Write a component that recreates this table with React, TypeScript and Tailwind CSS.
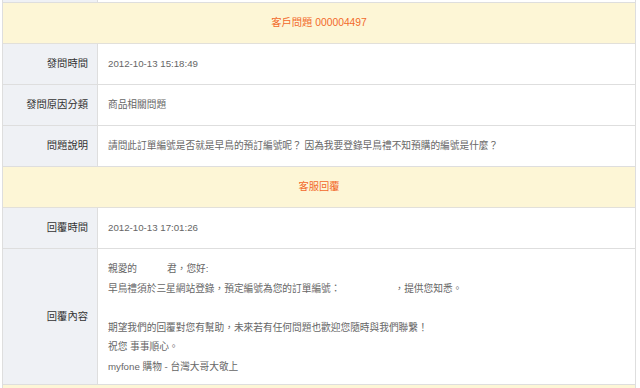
const font = "font-['Liberation_Sans','Noto_Sans_CJK_TC',sans-serif]";

function Header({ children }: { children?: React.ReactNode }) {
  return (
    <div className="flex h-[41px] items-center justify-center border-b border-[#e2e0da] bg-[#fdf6d6] text-[10.3px] text-[#f2692a]">
      {children}
    </div>
  );
}

function Row({ label, children, className = "h-[41px] items-center" }: { label: string; children: React.ReactNode; className?: string }) {
  return (
    <div className={`flex border-b border-[#dedede] ${className}`}>
      <div className="flex w-[95px] shrink-0 items-center justify-end self-stretch border-r border-[#dedede] bg-[#eff1f5] pr-[9px] text-[10.3px] text-[#333]">
        {label}
      </div>
      <div className="flex-1 pl-[10px] text-[9.7px] text-[#666]">{children}</div>
    </div>
  );
}

export default function App() {
  return (
    <div className={`h-[388px] w-[640px] overflow-hidden bg-white pl-[2px] ${font}`}>
      <div className="w-[634px] border-x border-[#dedede]">
        <div className="flex h-[3px] border-b border-[#dedede]">
          <div className="w-[95px] border-r border-[#dedede] bg-[#eff1f5]" />
          <div className="flex-1" />
        </div>

        <Header>客戶問題 000004497</Header>
        <Row label="發問時間">2012-10-13 15:18:49</Row>
        <Row label="發問原因分類">商品相關問題</Row>
        <Row label="問題說明">請問此訂單編號是否就是早鳥的預訂編號呢？ 因為我要登錄早鳥禮不知預購的編號是什麼？</Row>

        <Header>客服回覆</Header>
        <Row label="回覆時間">2012-10-13 17:01:26</Row>
        <Row label="回覆內容" className="items-stretch">
          <div className="pb-[8px] pt-[10px] leading-[19.5px]">
            <p>
              親愛的<span className="inline-block w-[30px]" />君，您好:
            </p>
            <p>
              早鳥禮須於三星網站登錄，預定編號為您的訂單編號：<span className="inline-block w-[54px]" />，提供您知悉。
            </p>
            <p>&nbsp;</p>
            <p>期望我們的回覆對您有幫助，未來若有任何問題也歡迎您隨時與我們聯繫！</p>
            <p>祝您 事事順心。</p>
            <p>myfone 購物 - 台灣大哥大敬上</p>
          </div>
        </Row>

        <Header />
      </div>
    </div>
  );
}
